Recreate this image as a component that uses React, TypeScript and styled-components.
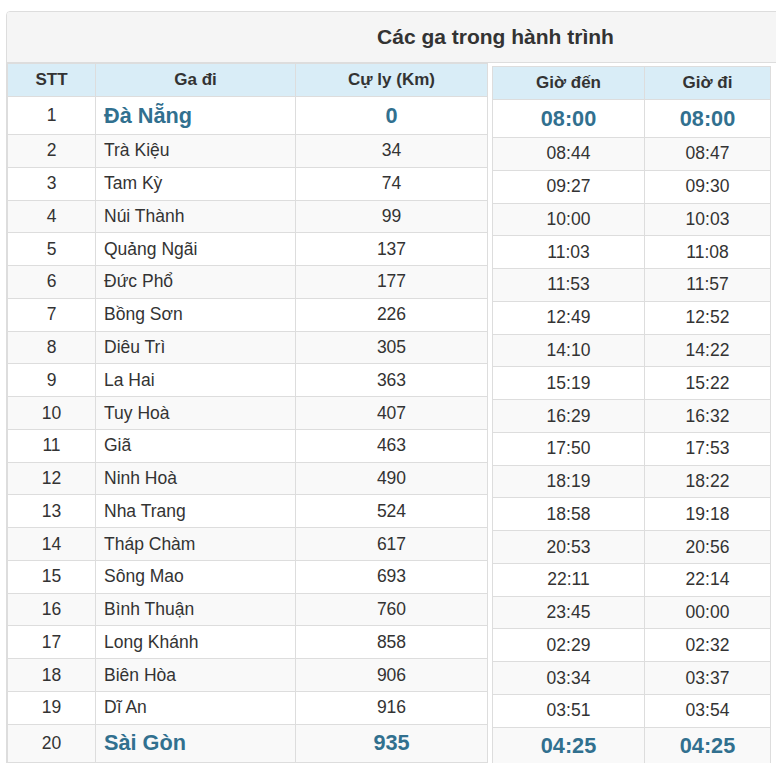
import React from 'react';
import styled, { createGlobalStyle } from 'styled-components';

const GlobalStyle = createGlobalStyle`
  body {
    margin: 0;
    background: #fff;
    color: #333;
    font-family: "Liberation Sans", Arial, sans-serif;
  }
`;

const Page = styled.div`
  width: 776px;
  height: 763px;
  overflow: hidden;
  padding: 11px 0 0 6px;
  box-sizing: border-box;
`;

const Panel = styled.div`
  width: 977px;
  border: 1px solid #ddd;
  border-radius: 4px 0 0 0;
  background: #fff;
`;

const Heading = styled.div`
  height: 50px;
  line-height: 50px;
  background: #f5f5f5;
  border-bottom: 1px solid #ddd;
  border-radius: 3px 0 0 0;
  text-align: center;
  font-size: 21px;
  font-weight: 700;
  color: #333;
`;

const Body = styled.div`
  display: flex;
  align-items: flex-start;
  gap: 4px;
`;

const Table = styled.div<{ $width: number; $offset: number }>`
  width: ${({ $width }) => $width}px;
  margin-top: ${({ $offset }) => $offset}px;
  border: 1px solid #ddd;
  border-top: none;
  box-sizing: border-box;
`;

const Row = styled.div<{ $cols: string; $height: number; $striped?: boolean; $head?: boolean }>`
  display: grid;
  grid-template-columns: ${({ $cols }) => $cols};
  height: ${({ $height }) => $height}px;
  border-top: 1px solid #ddd;
  box-sizing: border-box;
  background: ${({ $head, $striped }) => ($head ? '#d9edf7' : $striped ? '#f9f9f9' : '#fff')};
`;

const Cell = styled.div<{ $align?: 'left' | 'center'; $big?: boolean; $head?: boolean }>`
  display: flex;
  align-items: center;
  justify-content: ${({ $align }) => ($align === 'left' ? 'flex-start' : 'center')};
  padding: 0 8px;
  border-left: 1px solid #ddd;
  white-space: nowrap;
  font-size: ${({ $big, $head }) => ($big ? '21.7px' : $head ? '17px' : '17.5px')};
  font-weight: ${({ $big, $head }) => ($big || $head ? 700 : 400)};
  color: ${({ $big }) => ($big ? '#31708f' : '#333')};

  &:first-child {
    border-left: none;
  }
`;

type Stop = {
  name: string;
  km: number;
  arrive: string;
  depart: string;
};

const stops: Stop[] = [
  { name: 'Đà Nẵng', km: 0, arrive: '08:00', depart: '08:00' },
  { name: 'Trà Kiệu', km: 34, arrive: '08:44', depart: '08:47' },
  { name: 'Tam Kỳ', km: 74, arrive: '09:27', depart: '09:30' },
  { name: 'Núi Thành', km: 99, arrive: '10:00', depart: '10:03' },
  { name: 'Quảng Ngãi', km: 137, arrive: '11:03', depart: '11:08' },
  { name: 'Đức Phổ', km: 177, arrive: '11:53', depart: '11:57' },
  { name: 'Bồng Sơn', km: 226, arrive: '12:49', depart: '12:52' },
  { name: 'Diêu Trì', km: 305, arrive: '14:10', depart: '14:22' },
  { name: 'La Hai', km: 363, arrive: '15:19', depart: '15:22' },
  { name: 'Tuy Hoà', km: 407, arrive: '16:29', depart: '16:32' },
  { name: 'Giã', km: 463, arrive: '17:50', depart: '17:53' },
  { name: 'Ninh Hoà', km: 490, arrive: '18:19', depart: '18:22' },
  { name: 'Nha Trang', km: 524, arrive: '18:58', depart: '19:18' },
  { name: 'Tháp Chàm', km: 617, arrive: '20:53', depart: '20:56' },
  { name: 'Sông Mao', km: 693, arrive: '22:11', depart: '22:14' },
  { name: 'Bình Thuận', km: 760, arrive: '23:45', depart: '00:00' },
  { name: 'Long Khánh', km: 858, arrive: '02:29', depart: '02:32' },
  { name: 'Biên Hòa', km: 906, arrive: '03:34', depart: '03:37' },
  { name: 'Dĩ An', km: 916, arrive: '03:51', depart: '03:54' },
  { name: 'Sài Gòn', km: 935, arrive: '04:25', depart: '04:25' }
];

const LEFT_COLS = '87px 200px 1fr';
const RIGHT_COLS = '151px 1fr';
const HEAD_HEIGHT = 33;
const END_HEIGHT = 38;
const ROW_HEIGHT = 32.78;

const rowHeight = (index: number) =>
  index === 0 || index === stops.length - 1 ? END_HEIGHT : ROW_HEIGHT;

export default function App() {
  return (
    <>
      <GlobalStyle />
      <Page>
        <Panel>
          <Heading>Các ga trong hành trình</Heading>
          <Body>
            <Table $width={481} $offset={0}>
              <Row $cols={LEFT_COLS} $height={HEAD_HEIGHT} $head>
                <Cell $head>STT</Cell>
                <Cell $head>Ga đi</Cell>
                <Cell $head>Cự ly (Km)</Cell>
              </Row>
              {stops.map((stop, index) => {
                const big = index === 0 || index === stops.length - 1;
                return (
                  <Row
                    key={`left-${stop.name}`}
                    $cols={LEFT_COLS}
                    $height={rowHeight(index)}
                    $striped={index % 2 === 1}
                  >
                    <Cell>{index + 1}</Cell>
                    <Cell $align="left" $big={big}>{stop.name}</Cell>
                    <Cell $big={big}>{stop.km}</Cell>
                  </Row>
                );
              })}
            </Table>
            <Table $width={279} $offset={3}>
              <Row $cols={RIGHT_COLS} $height={HEAD_HEIGHT} $head>
                <Cell $head>Giờ đến</Cell>
                <Cell $head>Giờ đi</Cell>
              </Row>
              {stops.map((stop, index) => {
                const big = index === 0 || index === stops.length - 1;
                return (
                  <Row
                    key={`right-${stop.name}`}
                    $cols={RIGHT_COLS}
                    $height={rowHeight(index)}
                    $striped={index % 2 === 1}
                  >
                    <Cell $big={big}>{stop.arrive}</Cell>
                    <Cell $big={big}>{stop.depart}</Cell>
                  </Row>
                );
              })}
            </Table>
          </Body>
        </Panel>
      </Page>
    </>
  );
}
